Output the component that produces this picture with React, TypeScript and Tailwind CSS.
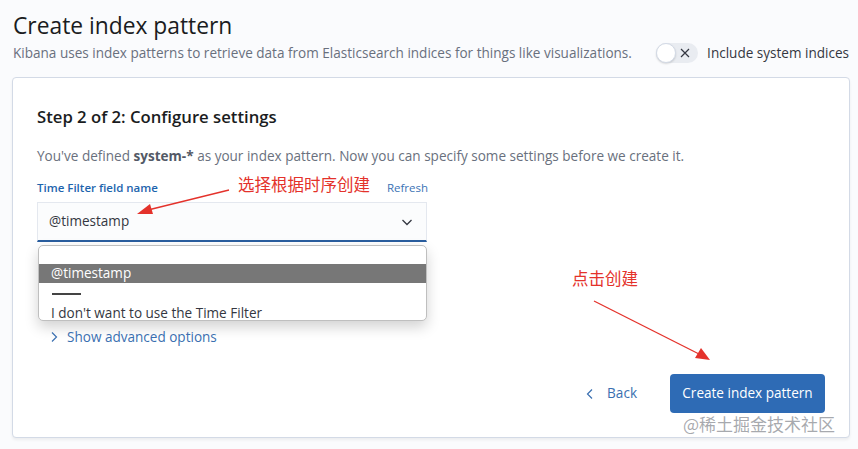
import React from "react";

export default function App() {
  return (
    <div className="relative w-[858px] h-[449px] overflow-hidden bg-[#fafbfd] font-['Open_Sans',sans-serif] text-[#343741]">
      <div className="pl-[13px] pr-[9px] pt-[10px]">
        <h1 className="text-[22.8px] leading-[32px] font-medium text-[#1a1c21]">Create index pattern</h1>
        <div className="mt-[1px] flex items-center justify-between">
          <p className="whitespace-nowrap text-[13.55px] leading-[20px] text-[#69707d]">
            Kibana uses index patterns to retrieve data from Elasticsearch indices for things like visualizations.
          </p>
          <div className="flex items-center gap-[9px]">
            <div className="relative w-[42px] h-[20px] rounded-full bg-[#e9ecf1]">
              <div className="absolute left-0 top-0 w-[20px] h-[20px] rounded-full bg-white border border-[#d3dae6] shadow-[0_1px_2px_rgba(0,0,0,0.15)]" />
              <svg className="absolute left-[24px] top-[5px]" width="10" height="10" viewBox="0 0 10 10">
                <path d="M1 1L9 9M9 1L1 9" stroke="#343741" strokeWidth="1.2" fill="none" />
              </svg>
            </div>
            <span className="whitespace-nowrap text-[13.55px] leading-[20px] text-[#343741]">Include system indices</span>
          </div>
        </div>
      </div>

      <div className="ml-[12px] mt-[14px] w-[838px] h-[361px] rounded-[4px] border border-[#d3dae6] bg-white shadow-[0_2px_3px_rgba(0,0,0,0.06)] flex flex-col px-[24px] pt-[27px] pb-[24px]">
        <h2 className="text-[16.7px] leading-[24px] font-semibold text-[#1a1c21]">Step 2 of 2: Configure settings</h2>
        <p className="mt-[17px] whitespace-nowrap text-[13.55px] leading-[20px] text-[#69707d]">
          You've defined <b className="font-bold text-[#535966]">system-*</b> as your index pattern. Now you can specify some settings before we create it.
        </p>
        <div className="mt-[13px] w-[391px] flex items-center justify-between">
          <span className="text-[11.5px] leading-[18px] font-semibold text-[#1d64ad]">Time Filter field name</span>
          <span className="text-[11.5px] leading-[18px] text-[#3b73b5]">Refresh</span>
        </div>
        <div className="mt-[5px] w-[390px] h-[40px] bg-[#fbfcfd] border border-[#e4e8ef] border-b-2 border-b-[#2a5e9f] flex items-center justify-between pl-[11px] pr-[12px]">
          <span className="text-[13.55px] text-[#343741]">@timestamp</span>
          <svg width="14" height="14" viewBox="0 0 14 14">
            <path d="M2.5 5L7 9.5L11.5 5" stroke="#343741" strokeWidth="1.3" fill="none" />
          </svg>
        </div>
        <div className="ml-[1px] mt-[3px] w-[389px] h-[76px] rounded-[5px] border border-[#bfbfbf] bg-white overflow-hidden shadow-[0_6px_14px_rgba(0,0,0,0.18)]">
          <div className="h-[18px]" />
          <div className="h-[19px] bg-[#777777] pl-[12px] text-[13.55px] leading-[19px] text-white">@timestamp</div>
          <div className="h-[21px] pl-[13px] flex items-center">
            <div className="w-[29px] h-[2px] bg-[#444]" />
          </div>
          <div className="pl-[12px] text-[13.55px] leading-[18px] text-[#343741]">I don't want to use the Time Filter</div>
        </div>
        <div className="mt-[6px] pl-[12px] flex items-center gap-[8px] text-[#3a6fb0]">
          <svg width="10" height="14" viewBox="0 0 10 14">
            <path d="M3 2.5L7.5 7L3 11.5" stroke="#3a6fb0" strokeWidth="1.2" fill="none" />
          </svg>
          <span className="text-[13.55px] leading-[20px]">Show advanced options</span>
        </div>
        <div className="mt-auto flex items-center justify-end gap-[33px]">
          <div className="flex items-center gap-[12px] text-[#3a6fb0]">
            <svg width="10" height="14" viewBox="0 0 10 14">
              <path d="M7 2.5L2.5 7L7 11.5" stroke="#3a6fb0" strokeWidth="1.2" fill="none" />
            </svg>
            <span className="text-[13.55px]">Back</span>
          </div>
          <div className="w-[155px] h-[39px] rounded-[4px] bg-[#2e6bb5] text-white text-[13.55px] flex items-center justify-center">
            Create index pattern
          </div>
        </div>
      </div>

      {/* annotations */}
      <div className="absolute left-[238px] top-[173px] text-[16.5px] leading-[22px] text-[#e4322b] font-['Noto_Sans_CJK_SC',sans-serif]">选择根据时序创建</div>
      <div className="absolute left-[572px] top-[267px] text-[16.5px] leading-[22px] text-[#e4322b] font-['Noto_Sans_CJK_SC',sans-serif]">点击创建</div>
      <svg className="absolute left-0 top-0 pointer-events-none" width="858" height="449" viewBox="0 0 858 449">
        <path d="M229 190L148 210" stroke="#e4322b" strokeWidth="1.3" fill="none" />
        <path d="M137 214L150 204L153 214Z" fill="#e4322b" />
        <path d="M594 301L699 354" stroke="#e4322b" strokeWidth="1.3" fill="none" />
        <path d="M710 360L695 358L701 348Z" fill="#e4322b" />
      </svg>
      <div className="absolute left-[683px] top-[413px] text-[17px] leading-[22px] text-[#8a8d93]/75 font-['Noto_Sans_CJK_SC',sans-serif]">@稀土掘金技术社区</div>
    </div>
  );
}
